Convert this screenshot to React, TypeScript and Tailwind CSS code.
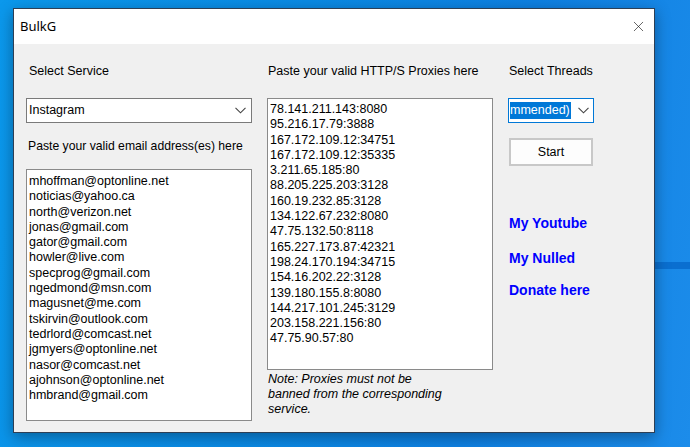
import { X } from "lucide-react";

const emails = [
  "mhoffman@optonline.net",
  "noticias@yahoo.ca",
  "north@verizon.net",
  "jonas@gmail.com",
  "gator@gmail.com",
  "howler@live.com",
  "specprog@gmail.com",
  "ngedmond@msn.com",
  "magusnet@me.com",
  "tskirvin@outlook.com",
  "tedrlord@comcast.net",
  "jgmyers@optonline.net",
  "nasor@comcast.net",
  "ajohnson@optonline.net",
  "hmbrand@gmail.com",
];

const proxies = [
  "78.141.211.143:8080",
  "95.216.17.79:3888",
  "167.172.109.12:34751",
  "167.172.109.12:35335",
  "3.211.65.185:80",
  "88.205.225.203:3128",
  "160.19.232.85:3128",
  "134.122.67.232:8080",
  "47.75.132.50:8118",
  "165.227.173.87:42321",
  "198.24.170.194:34715",
  "154.16.202.22:3128",
  "139.180.155.8:8080",
  "144.217.101.245:3129",
  "203.158.221.156:80",
  "47.75.90.57:80",
];

const Chevron = () => (
  <svg width="11" height="7" viewBox="0 0 11 7" className="shrink-0">
    <path d="M0.5 0.8 L5.5 5.8 L10.5 0.8" fill="none" stroke="#444" strokeWidth="1.1" />
  </svg>
);

const App = () => {
  return (
    <div className="relative w-[690px] h-[447px] overflow-hidden bg-[linear-gradient(100deg,#0b98ec_0%,#0a8ae4_40%,#0e80e2_70%,#1c8cea_100%)] font-['Liberation_Sans',Arial,sans-serif] text-[12.5px] text-black">
      <div className="absolute right-0 top-[262px] w-[40px] h-[7px] bg-[#0a6fd0]" />
      <div className="absolute left-[13px] top-[8px] w-[642px] h-[425px] border border-[#2d3f55] bg-[#f0f0f0] flex flex-col shadow-[0_4px_14px_rgba(0,0,0,0.35)]">
        {/* title bar */}
        <div className="h-[35px] bg-white flex items-center justify-between pl-[6px] pr-[7px] shrink-0">
          <span className="font-['Noto_Sans',sans-serif] text-[13px] leading-none text-black">BulkG</span>
          <X size={17} strokeWidth={0.9} color="#111" />
        </div>

        <div className="flex pl-[12px] pt-[20px] gap-[15px]">
          {/* left column */}
          <div className="w-[226px] flex flex-col">
            <div className="h-[14px] leading-[14px] pl-[3px]">Select Service</div>
            <div className="mt-[20px] h-[25px] bg-white border border-[#7a7a7a] flex items-center justify-between pl-[2px] pr-[5px]">
              <span>Instagram</span>
              <Chevron />
            </div>
            <div className="mt-[16px] h-[14px] leading-[14px] pl-[2px] text-[12.2px]">Paste your valid email address(es) here</div>
            <div className="mt-[16px] h-[252px] bg-white border border-[#8a8a8a] pl-[2px] pt-[4px]">
              {emails.map((e) => (
                <div key={e} className="h-[15.3px] leading-[15.3px]">{e}</div>
              ))}
            </div>
          </div>

          {/* middle column */}
          <div className="w-[226px] flex flex-col">
            <div className="h-[14px] leading-[14px] pl-[1px]">Paste your valid HTTP/S Proxies here</div>
            <div className="mt-[20px] h-[272px] bg-white border border-[#8a8a8a] pl-[2px] pt-[3px]">
              {proxies.map((p) => (
                <div key={p} className="h-[15.3px] leading-[15.3px]">{p}</div>
              ))}
            </div>
            <div className="mt-[2px] italic leading-[15px] pl-[1px] w-[182px]">
              Note: Proxies must not be banned from the corresponding service.
            </div>
          </div>

          {/* right column */}
          <div className="w-[90px] flex flex-col">
            <div className="h-[14px] leading-[14px] pl-[1px]">Select Threads</div>
            <div className="mt-[20px] w-[86px] h-[25px] bg-white border border-[#0078d7] flex items-center justify-between pl-[1px] pr-[4px]">
              <span className="bg-[#0078d7] text-white leading-[17px] pr-[1px] whitespace-nowrap">mmended)</span>
              <Chevron />
            </div>
            <button className="mt-[15px] ml-[1px] w-[84px] h-[28px] bg-[#fdfdfd] border-2 border-[#c8c8c8] text-[12.5px] text-black">
              Start
            </button>
            <div className="mt-[49px] pl-[1px] flex flex-col gap-[19px] text-[14px] font-bold text-[#0000ff] leading-[16px]">
              <span>My Youtube</span>
              <span>My Nulled</span>
              <span className="-mt-[3px]">Donate here</span>
            </div>
          </div>
        </div>
      </div>
    </div>
  );
};

export default App;
